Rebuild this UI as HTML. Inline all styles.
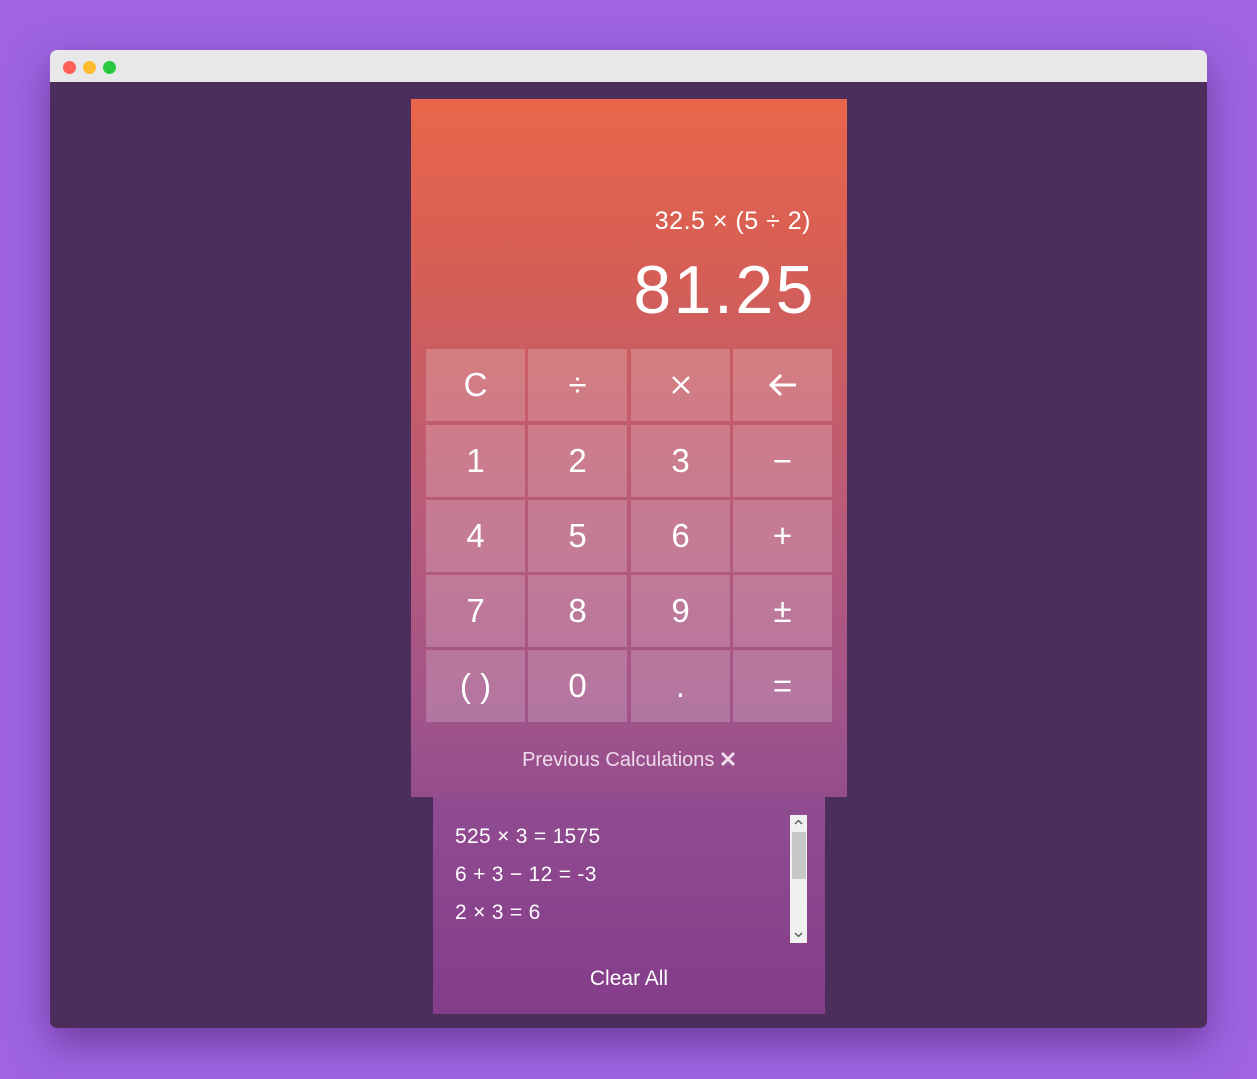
<!DOCTYPE html>
<html><head><meta charset="utf-8"><style>
*{margin:0;padding:0;box-sizing:border-box}
body{width:1257px;height:1079px;background:#a064e2;position:relative;overflow:hidden;font-family:"Liberation Sans",sans-serif;color:#fff}
.win{position:absolute;left:50px;top:50px;width:1157px;height:978px;border-radius:7px;overflow:hidden;background:#4c2e5c;box-shadow:0 15px 40px rgba(60,20,90,.5)}
.bar{height:32px;background:#e8e8e8;position:relative}
.dot{position:absolute;top:11px;width:13px;height:13px;border-radius:50%}
.panel{position:absolute;left:361px;top:49px;width:436px;height:698px;background:linear-gradient(#e8664a 0%,#d65e56 25%,#c95d63 38%,#b85b7a 60%,#9f538b 90%,#944d8d 100%)}
.expr{position:absolute;right:36px;top:108px;font-size:25px;font-weight:300;letter-spacing:.5px}
.res{position:absolute;right:31px;top:152px;font-size:68px;font-weight:300;letter-spacing:2.5px}
.k{position:absolute;width:99px;height:72px;background:rgba(255,255,255,.2);display:flex;align-items:center;justify-content:center;font-size:33px;font-weight:300}
.prev{position:absolute;left:0;right:0;top:650px;text-align:center;font-size:20px;color:#eedcec}
.hist{position:absolute;left:383px;top:747px;width:392px;height:217px;background:linear-gradient(#904c90,#843d8a)}
.hist p{position:absolute;left:22px;font-size:21px;letter-spacing:.3px}
.sb{position:absolute;left:357px;top:18px;width:17px;height:128px;background:#f0f0f0}
.th{position:absolute;left:2px;top:17px;width:14px;height:47px;background:#c8c8c8}
.clear{position:absolute;left:0;right:0;top:170px;text-align:center;font-size:21px}
</style></head><body>
<div class="win">
<div class="bar"><div class="dot" style="left:13px;background:#fe5f57"></div><div class="dot" style="left:33px;background:#febc2e"></div><div class="dot" style="left:53px;background:#28c840"></div></div>
<div class="panel">
<div class="expr">32.5 × (5 ÷ 2)</div>
<div class="res">81.25</div>
<div class="k" style="left:15px;top:250px">C</div>
<div class="k" style="left:117px;top:250px">÷</div>
<div class="k" style="left:220px;top:250px"><svg width="22" height="22" viewBox="0 0 22 22"><path d="M3 3l16 16M19 3L3 19" stroke="#fff" stroke-width="2.4"/></svg></div>
<div class="k" style="left:322px;top:250px"><svg width="32" height="26" viewBox="0 0 32 26"><path d="M29 13H4M14 3L4 13l10 10" fill="none" stroke="#fff" stroke-width="3"/></svg></div>
<div class="k" style="left:15px;top:326px">1</div>
<div class="k" style="left:117px;top:326px">2</div>
<div class="k" style="left:220px;top:326px">3</div>
<div class="k" style="left:322px;top:326px">−</div>
<div class="k" style="left:15px;top:401px">4</div>
<div class="k" style="left:117px;top:401px">5</div>
<div class="k" style="left:220px;top:401px">6</div>
<div class="k" style="left:322px;top:401px">+</div>
<div class="k" style="left:15px;top:476px">7</div>
<div class="k" style="left:117px;top:476px">8</div>
<div class="k" style="left:220px;top:476px">9</div>
<div class="k" style="left:322px;top:476px">±</div>
<div class="k" style="left:15px;top:551px">( )</div>
<div class="k" style="left:117px;top:551px">0</div>
<div class="k" style="left:220px;top:551px">.</div>
<div class="k" style="left:322px;top:551px">=</div>
<div class="prev">Previous Calculations <svg width="16" height="16" viewBox="0 0 16 16" style="vertical-align:-1px"><path d="M2 2l12 12M14 2L2 14" stroke="#eedcec" stroke-width="3"/></svg></div>
</div>
<div class="hist">
<p style="top:28px">525 × 3 = 1575</p>
<p style="top:66px">6 + 3 − 12 = -3</p>
<p style="top:104px">2 × 3 = 6</p>
<div class="sb"><div class="th"></div>
<svg style="position:absolute;left:4px;top:4px" width="9" height="6" viewBox="0 0 9 6"><path d="M1 5l3.5-3.5L8 5" fill="none" stroke="#555" stroke-width="1.3"/></svg>
<svg style="position:absolute;left:4px;top:117px" width="9" height="6" viewBox="0 0 9 6"><path d="M1 1l3.5 3.5L8 1" fill="none" stroke="#555" stroke-width="1.3"/></svg></div>
<div class="clear">Clear All</div>
</div>
</div>
</body></html>
